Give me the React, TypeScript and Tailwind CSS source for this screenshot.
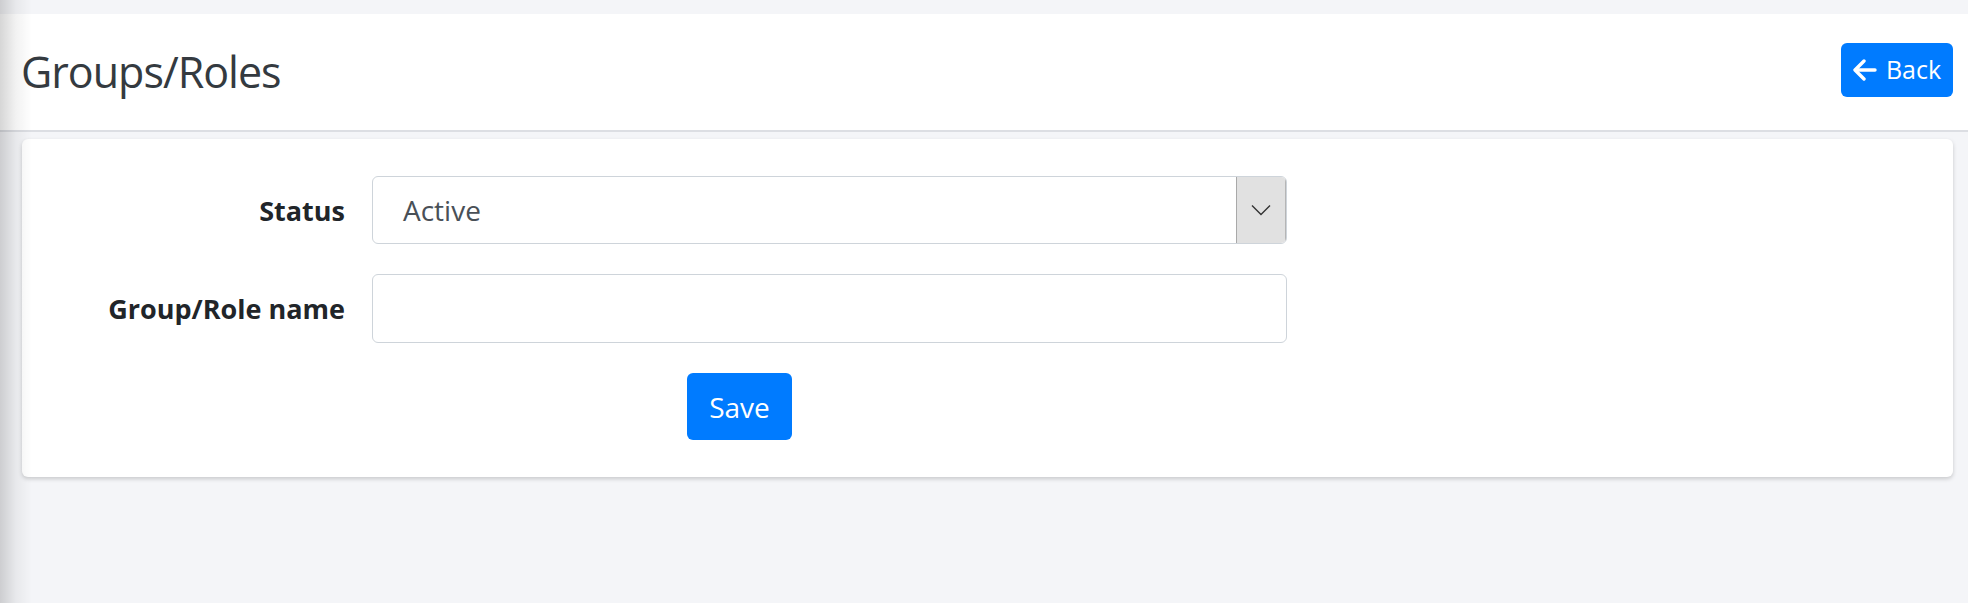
import React from "react";

export default function App() {
  return (
    <div
      className="relative w-full h-[603px] overflow-hidden bg-[#f4f5f8]"
      style={{ fontFamily: '"Open Sans", "Noto Sans", sans-serif' }}
    >
      <div className="h-[14px]" />
      <header className="h-[118px] bg-white border-b-2 border-[#dcdee3] flex items-center justify-between pl-[21px] pr-[15px]">
        <h1 className="text-[43px] leading-none font-normal text-[#343a40] tracking-[-1px] -mt-[2px]">
          Groups/Roles
        </h1>
        <button className="h-[54px] w-[112px] rounded-[6px] bg-[#007bff] text-white flex items-center justify-center gap-[9px] text-[25px] -mt-[4px]">
          <svg width="24" height="22" viewBox="0 0 24 22" fill="none" stroke="white" strokeWidth="3.4" strokeLinecap="round" strokeLinejoin="round">
            <path d="M11 2 L2 11 L11 20" />
            <path d="M3 11 H22" />
          </svg>
          <span className="leading-none -mt-[2px]">Back</span>
        </button>
      </header>
      <div className="mt-[7px] ml-[22px] mr-[15px] bg-white rounded-[6px] shadow-[0_2px_4px_rgba(0,0,0,0.18)] pt-[37px] pb-[37px]">
        <div className="flex items-center">
          <label className="w-[323px] text-right font-bold text-[27px] text-[#212529] leading-none">
            Status
          </label>
          <div className="ml-[27px] w-[915px] h-[68px] border border-[#ced4da] rounded-[6px] flex items-stretch overflow-hidden">
            <div className="flex-1 flex items-center pl-[30px] text-[28px] text-[#495057]">
              Active
            </div>
            <div className="w-[50px] bg-[#e1e1e1] border-l border-[#a9a9a9] border-r border-r-[#b5b5b5] flex items-center justify-center">
              <svg width="20" height="12" viewBox="0 0 20 12" fill="none" stroke="#333" strokeWidth="1.4">
                <path d="M1 1.5 L10 10.5 L19 1.5" />
              </svg>
            </div>
          </div>
        </div>
        <div className="flex items-center mt-[30px]">
          <label className="w-[323px] text-right font-bold text-[27px] text-[#212529] leading-none">
            Group/Role name
          </label>
          <input
            type="text"
            className="ml-[27px] w-[915px] h-[69px] border border-[#ced4da] rounded-[6px] outline-none px-[30px] text-[28px]"
          />
        </div>
        <div className="mt-[30px] ml-[665px]">
          <button className="h-[67px] w-[105px] rounded-[6px] bg-[#007bff] text-white text-[28px] flex items-center justify-center">
            Save
          </button>
        </div>
      </div>
      <div className="pointer-events-none absolute left-0 top-0 h-full w-[32px] bg-gradient-to-r from-[rgba(0,0,0,0.16)] via-[rgba(0,0,0,0.05)] to-transparent" />
    </div>
  );
}
